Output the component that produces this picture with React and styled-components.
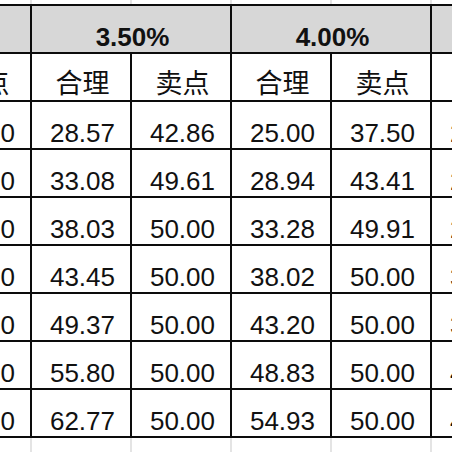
import styled, { createGlobalStyle } from "styled-components";

const GlobalStyle = createGlobalStyle`
  html, body {
    margin: 0;
    padding: 0;
    background: #fff;
  }
  body {
    font-family: "Liberation Sans", "Noto Sans CJK SC", sans-serif;
  }
`;

const rates = ["3.00%", "3.50%", "4.00%", "4.50%"];

const rows = [
  ["33.33", "50.00", "28.57", "42.86", "25.00", "37.50", "22.22", "33.33"],
  ["38.59", "50.00", "33.08", "49.61", "28.94", "43.41", "25.73", "38.59"],
  ["44.37", "50.00", "38.03", "50.00", "33.28", "49.91", "29.58", "44.37"],
  ["50.69", "50.00", "43.45", "50.00", "38.02", "50.00", "33.80", "50.00"],
  ["57.60", "50.00", "49.37", "50.00", "43.20", "50.00", "38.40", "50.00"],
  ["65.10", "50.00", "55.80", "50.00", "48.83", "50.00", "43.40", "50.00"],
  ["73.23", "50.00", "62.77", "50.00", "54.93", "50.00", "48.83", "50.00"],
];

const App = () => {
  return (
    <>
      <GlobalStyle />
      <Sheet>
        <Table>
          {rates.map((r) => (
            <Cell key={r} $head $span={2}>
              {r}
            </Cell>
          ))}
          {rates.map((r) => [
            <Cell key={r + "a"} $cjk>合理</Cell>,
            <Cell key={r + "b"} $cjk>卖点</Cell>,
          ])}
          {rows.map((row, i) =>
            row.map((v, j) => <Cell key={i + "-" + j}>{v}</Cell>)
          )}
        </Table>
      </Sheet>
    </>
  );
};
export default App;

const Sheet = styled.div`
  width: 452px;
  height: 452px;
  overflow: hidden;
  padding-top: 4px;
  box-sizing: border-box;
  background-image: repeating-linear-gradient(
    to right,
    transparent 0 30px,
    #e4e4e4 30px 32px,
    transparent 32px 100px
  );
`;

const Table = styled.div`
  display: grid;
  grid-template-columns: repeat(8, 98px);
  grid-auto-rows: 46px;
  gap: 2px;
  padding: 2px;
  width: max-content;
  margin-left: -170px;
  background: #0c0c0c;
`;

const Cell = styled.div`
  grid-column: span ${(p) => p.$span || 1};
  display: flex;
  align-items: flex-end;
  justify-content: center;
  padding: 0 0 ${(p) => (p.$cjk ? "3px" : "2px")} 3px;
  box-sizing: border-box;
  background: ${(p) => (p.$head ? "#d7d7d7" : "#fff")};
  color: #111;
  font-size: ${(p) => (p.$cjk ? "27px" : "26px")};
  line-height: 26px;
  font-weight: ${(p) => (p.$head ? 700 : 400)};
  white-space: nowrap;
  overflow: hidden;
`;
